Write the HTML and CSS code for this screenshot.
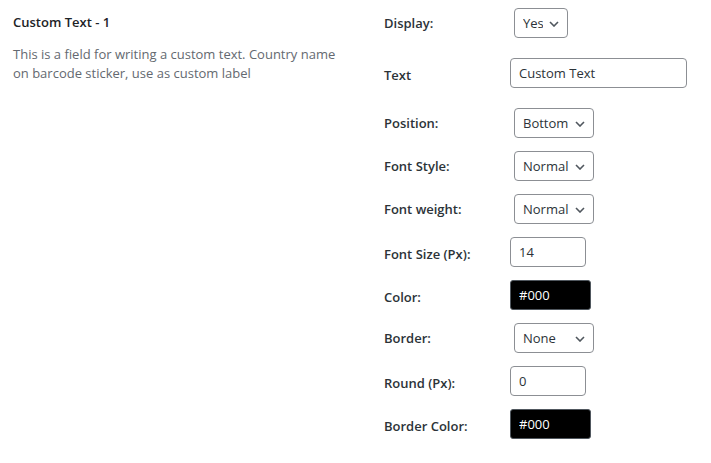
FILE: index.html
```html
<!doctype html>
<html lang="en">
<head>
    <meta charset="UTF-8" />
    <title>Custom Text</title>
    <link rel="stylesheet" href="styles.css">
</head>
<body>
<div class="section">
    <div class="intro">
        <h3>Custom Text - 1</h3>
        <p>This is a field for writing a custom text. Country name on barcode sticker, use as custom label</p>
    </div>
    <div class="fields">
        <div class="row row-wide">
            <label>Display:</label>
            <span class="select select-sm">
                <select><option>Yes</option><option>No</option></select>
                <svg viewBox="0 0 10 6" width="10" height="6"><path d="M1 1l4 4 4-4" /></svg>
            </span>
        </div>
        <div class="row row-wide">
            <label class="label-low">Text</label>
            <input type="text" class="input input-lg" value="Custom Text" />
        </div>
        <div class="row">
            <label>Position:</label>
            <span class="select select-md">
                <select><option>Bottom</option><option>Top</option></select>
                <svg viewBox="0 0 10 6" width="10" height="6"><path d="M1 1l4 4 4-4" /></svg>
            </span>
        </div>
        <div class="row">
            <label>Font Style:</label>
            <span class="select select-md">
                <select><option>Normal</option><option>Italic</option></select>
                <svg viewBox="0 0 10 6" width="10" height="6"><path d="M1 1l4 4 4-4" /></svg>
            </span>
        </div>
        <div class="row">
            <label>Font weight:</label>
            <span class="select select-md">
                <select><option>Normal</option><option>Bold</option></select>
                <svg viewBox="0 0 10 6" width="10" height="6"><path d="M1 1l4 4 4-4" /></svg>
            </span>
        </div>
        <div class="row">
            <label class="label-low">Font Size (Px):</label>
            <input type="number" class="input input-sm" value="14" />
        </div>
        <div class="row">
            <label class="label-low">Color:</label>
            <input type="text" class="input color" value="#000" />
        </div>
        <div class="row">
            <label>Border:</label>
            <span class="select select-md">
                <select><option>None</option><option>Solid</option></select>
                <svg viewBox="0 0 10 6" width="10" height="6"><path d="M1 1l4 4 4-4" /></svg>
            </span>
        </div>
        <div class="row">
            <label class="label-low">Round (Px):</label>
            <input type="number" class="input input-sm" value="0" />
        </div>
        <div class="row">
            <label class="label-low">Border Color:</label>
            <input type="text" class="input color" value="#000" />
        </div>
    </div>
</div>
</body>
</html>
```

FILE: styles.css
```css
html,body {
    margin: 0;
    padding: 0;
    background: white;
    font-family: "Open Sans", "Noto Sans", sans-serif;
    font-size: 13px;
    color: #1d2327;
}
.section {
    display: flex;
    padding-left: 13px;
}
.intro {
    width: 371px;
    padding-top: 13px;
}
.intro h3 {
    font-size: 13px;
    font-weight: 600;
    line-height: 18px;
    margin: 0;
}
.intro p {
    color: #646970;
    line-height: 19px;
    margin: 14px 0 0;
    max-width: 336px;
}
.fields {
    display: flex;
    flex-direction: column;
    gap: 13px;
    padding-top: 8px;
}
.row {
    display: flex;
    align-items: center;
    height: 30px;
}
.row-wide {
    margin-bottom: 7px;
}
.row label {
    width: 126px;
    font-weight: 600;
    color: #2c3338;
}
.row .label-low {
    padding-top: 3px;
}
.select {
    position: relative;
    display: inline-block;
    margin-left: 4px;
}
.select select {
    appearance: none;
    -webkit-appearance: none;
    background: white;
    border: 1px solid #8c8f94;
    border-radius: 4px;
    box-sizing: border-box;
    color: #2c3338;
    font: inherit;
    height: 30px;
    padding: 0 24px 0 8px;
    width: 100%;
}
.select svg {
    position: absolute;
    right: 9px;
    top: 13px;
    fill: none;
    stroke: #50575e;
    stroke-width: 1.6;
}
.select-sm {
    width: 54px;
}
.select-md {
    width: 80px;
}
.input {
    border: 1px solid #8c8f94;
    border-radius: 4px;
    box-sizing: border-box;
    color: #2c3338;
    font: inherit;
    height: 30px;
    padding: 0 8px;
    -moz-appearance: textfield;
}
.input::-webkit-inner-spin-button,
.input::-webkit-outer-spin-button {
    -webkit-appearance: none;
    margin: 0;
}
.input-lg {
    width: 177px;
}
.input-sm {
    width: 76px;
}
.color {
    background: #000;
    border-color: #50575e;
    border-radius: 3px;
    color: #fff;
    width: 81px;
}
```
